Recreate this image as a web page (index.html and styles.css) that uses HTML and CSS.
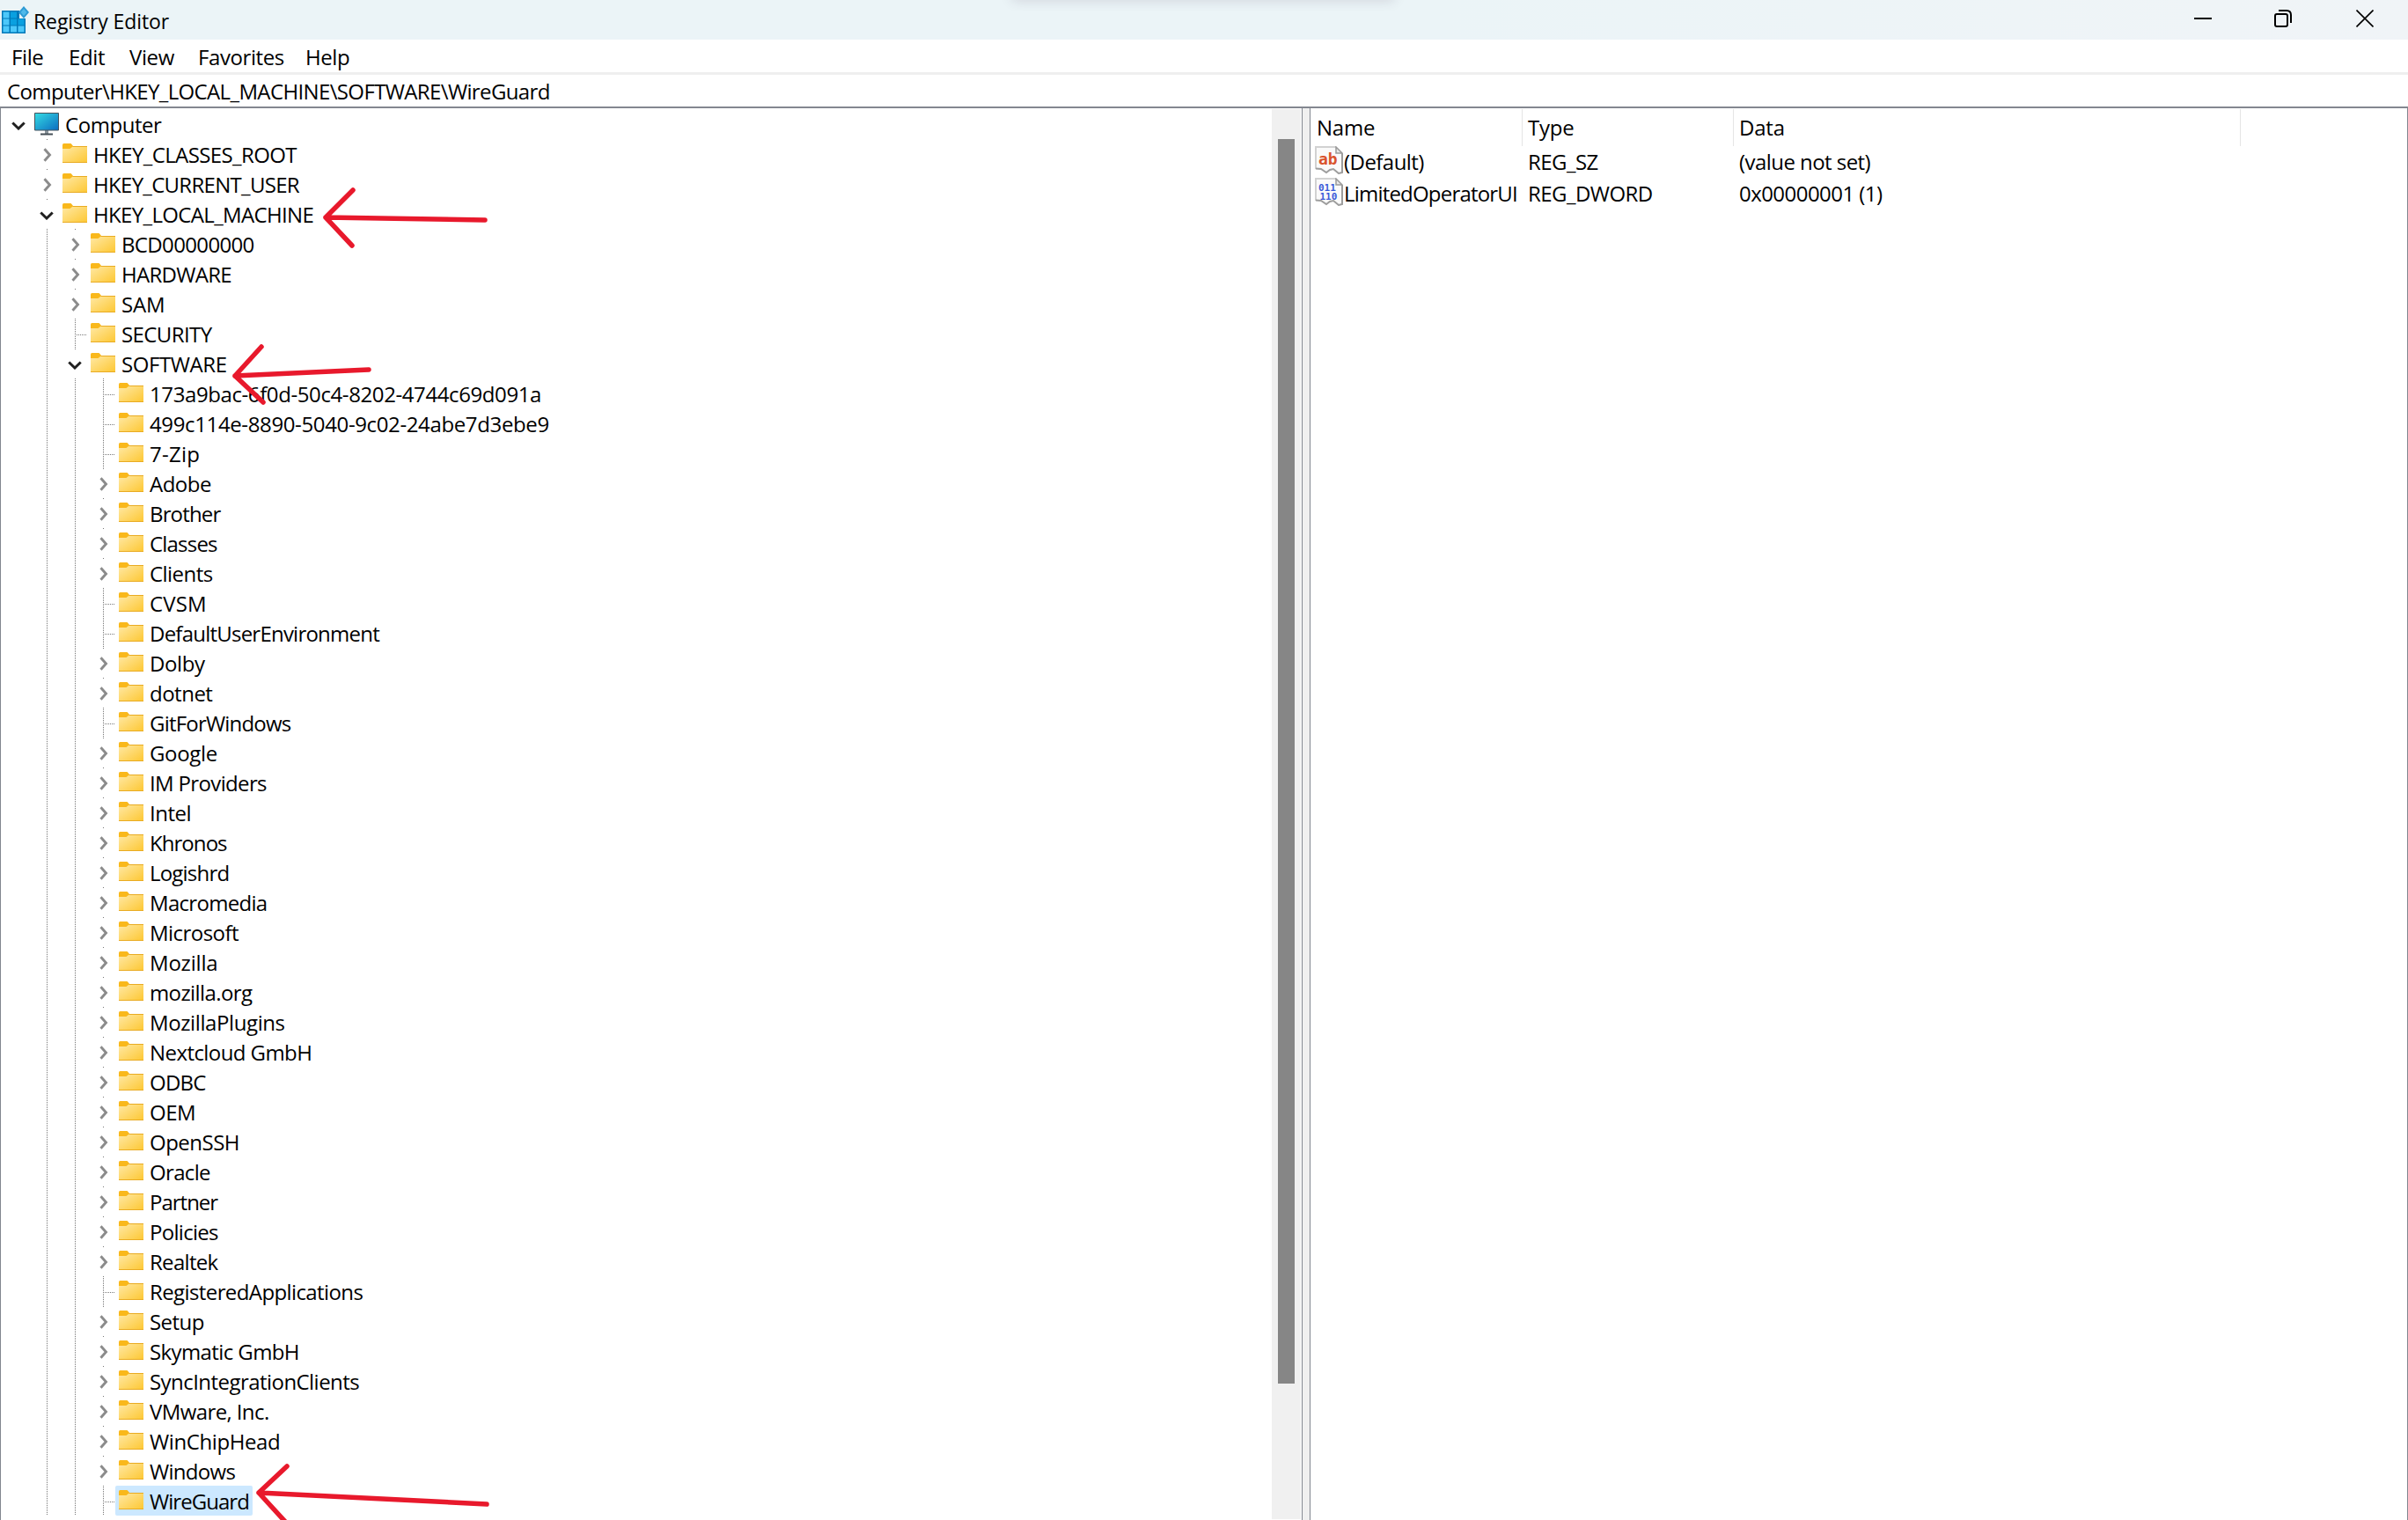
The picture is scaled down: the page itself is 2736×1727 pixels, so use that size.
FILE: index.html
```
<!DOCTYPE html>
<html lang="en">
<head>
  <meta charset="UTF-8">
  <title>Registry Editor</title>
  <link rel="stylesheet" href="styles.css">
</head>
<body>
  <svg class="sprite">
    <defs>
      <linearGradient id="folderFill" x1="0" y1="0" x2="1" y2="1">
        <stop offset="0" stop-color="#ffe9a6"/>
        <stop offset="1" stop-color="#fdc732"/>
      </linearGradient>
      <linearGradient id="screenFill" x1="0" y1="0" x2="1" y2="1">
        <stop offset="0" stop-color="#35dce4"/>
        <stop offset="1" stop-color="#0b6cc0"/>
      </linearGradient>
      <symbol id="folder" viewBox="0 0 28 22">
        <path d="M0 1.5Q0 0 1.500 0H9.500L12 2.800V6H0z" fill="#f9b81b"/>
        <path d="M0 6H8.500L12 3.300H28V22H0z" fill="url(#folderFill)"/>
        <path d="M0 21.500H28M11.500 3.500H28" stroke="#e9ab22" fill="none"/>
      </symbol>
      <symbol id="computer" viewBox="0 0 28 26">
        <path d="M12 20h4v4h-4z" fill="#8b959c"/>
        <path d="M7 23.500h14v2H7z" fill="#454f57"/>
        <path d="M.5 .5h27v19.500H.5z" fill="url(#screenFill)" stroke="#47525c"/>
      </symbol>
      <symbol id="closed" viewBox="0 0 10 16">
        <path d="M1.500 1.300L7.500 8L1.500 14.700" fill="none" stroke="#8b8b8b" stroke-width="2.900"/>
      </symbol>
      <symbol id="open" viewBox="0 0 16 10">
        <path d="M1.300 1.500L8 8L14.700 1.500" fill="none" stroke="#202020" stroke-width="3"/>
      </symbol>
      <symbol id="sheet" viewBox="0 0 32 32">
        <path d="M1 1H24L31 8V30L27 31L20 26H16L12 29L7 25H1z" fill="#fafafa"/>
        <path d="M1 26V1H24" fill="none" stroke="#d2d2d2" stroke-width="2"/>
        <path d="M24 1V8H31z" fill="#e8e8e8" stroke="#9a9a9a" stroke-width="1.500"/>
        <path d="M31 8V30L27 31L21 26L17 27L13 30L7 26L1 25.500" fill="none" stroke="#9d9d9d" stroke-width="2"/>
      </symbol>
    </defs>
  </svg>

  <div class="window">
    <header class="titlebar">
      <svg class="app-icon" viewBox="0 0 32 32">
        <path d="M0 5H20V14H27V31H0z" fill="#0078b8"/>
        <path d="M1.500 6.500h7v7h-7zM1.500 14.500h7v7h-7zM1.500 22.500h7v7h-7zM10 22.500h7v7h-7zM18.500 22.500h7v7h-7z" fill="#4cc8fa"/>
        <path d="M10 6.500h7v7h-7zM10 14.500h7v7h-7zM18.500 14.500h7v7h-7z" fill="#0aa0e0"/>
        <path d="M25 0L31 7L25 14L19 7z" fill="#2d9ad4"/>
        <path d="M25 3L28.500 7L25 11L21.500 7z" fill="#50b9ea"/>
      </svg>
      <span class="title">Registry Editor</span>
      <div class="window-buttons">
        <svg viewBox="0 0 20 20"><path d="M0 10H20" stroke="#000" stroke-width="2"/></svg>
        <svg viewBox="0 0 20 20" fill="none" stroke="#000" stroke-width="2"><rect x="1" y="5" width="14" height="14" rx="2"/><path d="M5 1H14Q19 1 19 6V15"/></svg>
        <svg viewBox="0 0 20 20"><path d="M.5 .5L19.500 19.500M19.500 .5L.5 19.500" stroke="#000" stroke-width="1.600"/></svg>
      </div>
      <div class="top-shadow"></div>
    </header>

    <nav class="menu">
      <span class="m-file">File</span>
      <span class="m-edit">Edit</span>
      <span class="m-view">View</span>
      <span class="m-fav">Favorites</span>
      <span class="m-help">Help</span>
    </nav>

    <div class="address"><span>Computer\HKEY_LOCAL_MACHINE\SOFTWARE\WireGuard</span></div>

    <main class="panes">
      <div class="tree" id="tree"></div>
      <div class="scrollbar"><div class="thumb"></div></div>
      <div class="splitter"></div>
      <div class="values">
        <div class="row head">
          <span>Name</span><span>Type</span><span>Data</span>
        </div>
        <div class="row">
          <span class="name"><svg viewBox="0 0 32 32"><use href="#sheet"/><text class="ab" x="4" y="20.500">ab</text></svg>(Default)</span>
          <span>REG_SZ</span><span>(value not set)</span>
        </div>
        <div class="row">
          <span class="name limited"><svg viewBox="0 0 32 32"><use href="#sheet"/><text class="bin" x="4" y="14.500">011</text><text class="bin" x="5.500" y="24.500">110</text></svg>LimitedOperatorUI</span>
          <span>REG_DWORD</span><span>0x00000001 (1)</span>
        </div>
      </div>
    </main>

    <svg class="arrows" viewBox="0 0 2736 1727">
      <path d="M551 250L370 247M401 216L370 247L400 279"/>
      <path d="M419 420L267 427M297 394L267 427L299 457"/>
      <path d="M553 1709L294 1696M326 1666L294 1696L326 1731"/>
    </svg>
  </div>

  <script src="script.js"></script>
</body>
</html>
```
FILE: styles.css
```
body {
  margin: 0;
  background: #fff;
  color: #000;
  font-family: "Open Sans", "Noto Sans", sans-serif;
  font-size: 24px;
}

.sprite {
  position: absolute;
  width: 0;
  height: 0;
}

.window {
  position: relative;
  display: flex;
  flex-direction: column;
  width: 2736px;
  height: 1727px;
  overflow: hidden;
}

.titlebar {
  position: relative;
  display: flex;
  align-items: center;
  flex: none;
  height: 45px;
  overflow: hidden;
  background: linear-gradient(90deg, #ebf4f7, #ebf4f7 60%, #f0f4f7);
}

.app-icon {
  width: 32px;
  height: 32px;
  margin-left: 2px;
}

.title {
  margin: 2px 0 0 4px;
  font-size: 23px;
  letter-spacing: -0.1px;
}

.window-buttons {
  display: flex;
  gap: 72px;
  margin: 0 39px 3px auto;
}

.window-buttons svg {
  width: 20px;
  height: 20px;
}

.window-buttons svg:nth-child(2) {
  margin: 0 1px 0 -1px;
}

.top-shadow {
  position: absolute;
  top: -8px;
  left: 1150px;
  width: 434px;
  height: 8px;
  box-shadow: 0 0 14px rgba(60, 40, 70, 0.2);
}

.menu {
  display: flex;
  flex: none;
  box-sizing: border-box;
  height: 40px;
  padding-left: 13px;
  line-height: 40px;
  letter-spacing: -0.4px;
  border-bottom: 3px solid #efefef;
}

.m-file { width: 65px; }
.m-edit { width: 69px; }
.m-view { width: 78px; }
.m-fav { width: 122px; }

.address {
  flex: none;
  box-sizing: border-box;
  height: 38px;
  padding-left: 8px;
  line-height: 38px;
  letter-spacing: -0.63px;
  border-bottom: 2px solid #838790;
}

.panes {
  display: flex;
  flex: 1;
  border-left: 1px solid #828790;
  border-right: 1px solid #828790;
}

/* tree */
.tree {
  width: 1444px;
  box-sizing: border-box;
  padding: 1px 0 0 2px;
}

.node {
  display: flex;
  height: 34px;
}

.cell {
  display: flex;
  align-items: center;
  justify-content: center;
  flex: none;
  width: 32px;
  padding-left: 4px;
  box-sizing: border-box;
}

.line {
  background: repeating-linear-gradient(#777 0 1px, transparent 1px 2px) 18px 0 / 1px 100% no-repeat;
}

.dot {
  background: linear-gradient(#777, #777) 18px 0 / 1px 1px no-repeat;
}

.leaf {
  background:
    repeating-linear-gradient(#777 0 1px, transparent 1px 2px) 18px 0 / 1px 100% no-repeat,
    repeating-linear-gradient(90deg, #777 0 1px, transparent 1px 2px) 18px 18px / 14px 1px no-repeat;
}

.closed {
  width: 10px;
  height: 16px;
  margin: 2px 0 0 2px;
}

.open {
  width: 16px;
  height: 10px;
  margin-top: 4px;
}

.item {
  display: flex;
  padding: 0 4px;
  line-height: 35px;
  white-space: nowrap;
}

.item.selected {
  background: #cce8ff;
  border-radius: 2px;
}

.folder {
  width: 28px;
  height: 22px;
  margin: 5px 7px 0 0;
}

.computer {
  width: 28px;
  height: 26px;
  margin: 4px 7px 0 0;
}

.scrollbar {
  width: 33px;
  height: 1602px;
  box-sizing: border-box;
  margin: 1px 1px 0 0;
  padding: 34px 7px 0;
  background: #f0f0f0;
}

.thumb {
  height: 1414px;
  background: #868686;
}

.splitter {
  width: 8px;
  background: #f0f0f0;
  border-left: 1px solid #828790;
  border-right: 1px solid #828790;
}

/* value list */
.values {
  flex: 1;
  letter-spacing: -0.55px;
}

.row {
  display: grid;
  grid-template-columns: 241px 240px 576px;
  height: 36px;
  line-height: 35px;
}

.row > span {
  padding-left: 6px;
  white-space: nowrap;
}

.row .name {
  display: flex;
  padding-left: 5px;
}

.row .limited {
  letter-spacing: -0.8px;
}

.head {
  height: 40px;
  line-height: 42px;
  letter-spacing: -0.2px;
  margin-top: 1px;
  margin-bottom: 2px;
}

.head span {
  border-right: 1px solid #e5e5e5;
}

.head span:first-child {
  padding-left: 7px;
}

.name svg {
  flex: none;
  width: 32px;
  height: 32px;
  margin-right: 1px;
}

.ab {
  font: bold 18px "DejaVu Sans Mono", monospace;
  letter-spacing: 0;
  fill: #d9532c;
}

.bin {
  font: bold 11px "DejaVu Sans Mono", monospace;
  letter-spacing: 0;
  fill: #3a5bd9;
}

/* red arrows drawn over the tree */
.arrows {
  position: absolute;
  top: 0;
  left: 0;
  width: 2736px;
  height: 1727px;
  fill: none;
  stroke: #e8192c;
  stroke-width: 5.5;
  stroke-linecap: round;
  stroke-linejoin: round;
  pointer-events: none;
}
```
FILE: script.js
```
// [depth, state, name, letter spacing] - state: o = open, c = closed, l = leaf
const keys = [
  [0, 'o', 'Computer', -0.45],
  [1, 'c', 'HKEY_CLASSES_ROOT', -0.6],
  [1, 'c', 'HKEY_CURRENT_USER', -0.7],
  [1, 'o', 'HKEY_LOCAL_MACHINE', -0.65],
  [2, 'c', 'BCD00000000', -0.65],
  [2, 'c', 'HARDWARE', -0.7],
  [2, 'c', 'SAM', -0.2],
  [2, 'l', 'SECURITY', -0.6],
  [2, 'o', 'SOFTWARE', -0.4],
  [3, 'l', '173a9bac-6f0d-50c4-8202-4744c69d091a', -0.4],
  [3, 'l', '499c114e-8890-5040-9c02-24abe7d3ebe9', -0.37],
  [3, 'l', '7-Zip', 0.25],
  [3, 'c', 'Adobe', -0.5],
  [3, 'c', 'Brother', -0.85],
  [3, 'c', 'Classes', -0.8],
  [3, 'c', 'Clients', -0.55],
  [3, 'l', 'CVSM', 0.1],
  [3, 'l', 'DefaultUserEnvironment', -0.77],
  [3, 'c', 'Dolby', -0.4],
  [3, 'c', 'dotnet', -0.5],
  [3, 'l', 'GitForWindows', -0.8],
  [3, 'c', 'Google', -0.35],
  [3, 'c', 'IM Providers', -0.65],
  [3, 'c', 'Intel', -0.5],
  [3, 'c', 'Khronos', -0.95],
  [3, 'c', 'Logishrd', -0.8],
  [3, 'c', 'Macromedia', -0.7],
  [3, 'c', 'Microsoft', -0.55],
  [3, 'c', 'Mozilla', -0.2],
  [3, 'c', 'mozilla.org', -0.6],
  [3, 'c', 'MozillaPlugins', -0.4],
  [3, 'c', 'Nextcloud GmbH', -0.57],
  [3, 'c', 'ODBC', -0.75],
  [3, 'c', 'OEM', -0.45],
  [3, 'c', 'OpenSSH', -0.5],
  [3, 'c', 'Oracle', -0.65],
  [3, 'c', 'Partner', -1],
  [3, 'c', 'Policies', -0.7],
  [3, 'c', 'Realtek', -0.7],
  [3, 'l', 'RegisteredApplications', -0.6],
  [3, 'c', 'Setup', -0.55],
  [3, 'c', 'Skymatic GmbH', -0.6],
  [3, 'c', 'SyncIntegrationClients', -0.55],
  [3, 'c', 'VMware, Inc.', -0.6],
  [3, 'c', 'WinChipHead', -0.4],
  [3, 'c', 'Windows', -0.7],
  [3, 'l', 'WireGuard', -0.95]
];

const icon = name => `<svg class="${name}"><use href="#${name}"/></svg>`;

document.getElementById('tree').innerHTML = keys.map(([depth, state, name, spacing]) => {
  let cells = '';
  for (let i = 0; i < depth; i++) {
    cells += `<div class="cell ${i > 0 ? 'line' : ''}"></div>`;
  }
  if (state === 'l') {
    cells += '<div class="cell leaf"></div>';
  } else {
    cells += `<div class="cell ${depth > 0 ? 'dot' : ''}">${icon(state === 'o' ? 'open' : 'closed')}</div>`;
  }
  const selected = name === 'WireGuard' ? ' selected' : '';
  return `<div class="node">${cells}<div class="item${selected}">${icon(depth ? 'folder' : 'computer')}<span style="letter-spacing: ${spacing}px">${name}</span></div></div>`;
}).join('');
```
